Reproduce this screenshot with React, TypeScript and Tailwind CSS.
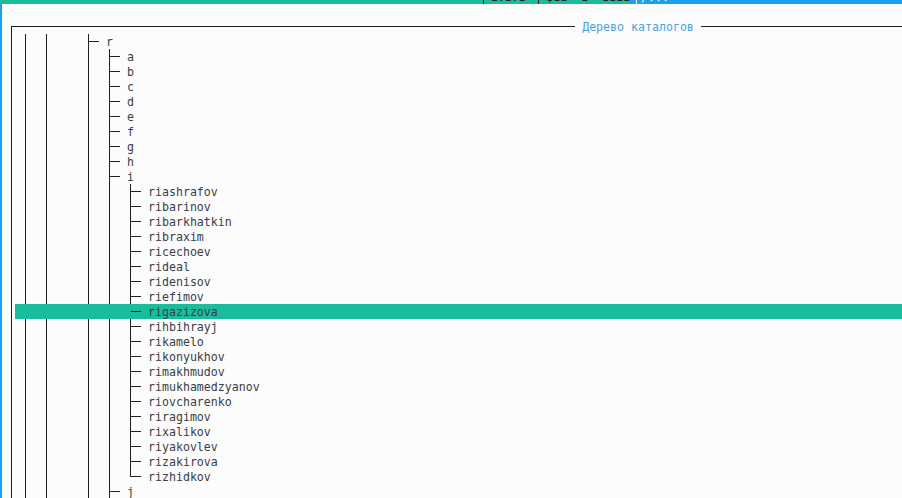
import clsx from "clsx";

type Cell = "v" | "b" | "l" | "_";

interface TreeRow {
  cells: Cell[];
  name: string;
}

const letters = ["a", "b", "c", "d", "e", "f", "g", "h", "i"];
const users = [
  "riashrafov",
  "ribarinov",
  "ribarkhatkin",
  "ribraxim",
  "ricechoev",
  "rideal",
  "ridenisov",
  "riefimov",
  "rigazizova",
  "rihbihrayj",
  "rikamelo",
  "rikonyukhov",
  "rimakhmudov",
  "rimukhamedzyanov",
  "riovcharenko",
  "riragimov",
  "rixalikov",
  "riyakovlev",
  "rizakirova",
  "rizhidkov",
];

const rows: TreeRow[] = [{ cells: ["v", "v", "_", "b"], name: "r" }];
letters.forEach((l) => rows.push({ cells: ["v", "v", "_", "v", "b"], name: l }));
users.forEach((u, i) =>
  rows.push({ cells: ["v", "v", "_", "v", "v", i === users.length - 1 ? "l" : "b"], name: u })
);
rows.push({ cells: ["v", "v", "_", "v", "b"], name: "j" });

const SELECTED = "rigazizova";

function TreeCell({ kind, selected }: { kind: Cell; selected: boolean }) {
  if (kind === "_") return <div className="h-[15px] w-[21px] shrink-0" />;
  return (
    <div className="flex h-[15px] w-[21px] shrink-0">
      <div className="w-[3px]" />
      <div className="flex w-px flex-col">
        {!selected && (
          <div className={clsx("w-px bg-[#1f1f1f]", kind === "l" ? "h-[8px]" : "h-full")} />
        )}
      </div>
      {kind !== "v" ? (
        <div className="flex w-[10px] flex-col pt-[7px]">
          <div className="h-px w-full bg-[#1f1f1f]" />
        </div>
      ) : null}
    </div>
  );
}

export default function App() {
  return (
    <div
      className="flex h-[498px] w-[902px] flex-col overflow-hidden bg-[#fcfcfc] text-[11.6px]"
      style={{ fontFamily: '"DejaVu Sans Mono", "Liberation Mono", monospace' }}
    >
      {/* clipped status bar of the terminal */}
      <div className="h-[4px] shrink-0 overflow-hidden">
        <div className="-mt-[11px] flex h-[15px] leading-[17px]">
          <div className="flex w-[630px] bg-[#1abc9c] text-[#222]">
            <div className="w-[487px]" />
            <div className="w-px bg-[#222]" />
            <div className="w-[55px] pl-[7px] whitespace-pre">1.1.1</div>
            <div className="w-px bg-[#222]" />
            <div className="flex-1 pl-[7px] whitespace-pre">$11  1  1111</div>
          </div>
          <div className="w-[6px] bg-[#1d9ff0]" />
          <div className="w-px bg-white" />
          <div className="flex-1 bg-[#1d9ff0] pl-[4px] text-white whitespace-pre">/...</div>
        </div>
      </div>

      <div className="flex flex-1">
        <div className="w-[2px] shrink-0 bg-[#1d9ff0]" />
        <div className="flex flex-1 flex-col">
          <div className="h-[15px] shrink-0" />

          {/* frame title */}
          <div className="flex h-[15px] shrink-0">
            <div className="w-[9px]" />
            <div className="flex w-[564px] flex-col">
              <div className="h-[7px]" />
              <div className="flex-1 border-l border-t border-[#1f1f1f]" />
            </div>
            <div className="w-[126px] text-center leading-[17px] text-[#4aa2e6] whitespace-pre">
              Дерево каталогов
            </div>
            <div className="flex flex-1 flex-col">
              <div className="h-[7px]" />
              <div className="border-t border-[#1f1f1f]" />
            </div>
          </div>

          {rows.map((row) => {
            const selected = row.name === SELECTED;
            return (
              <div key={row.name} className="flex h-[15px] shrink-0">
                <div className="w-[9px]" />
                <div className="w-px bg-[#1f1f1f]" />
                <div className="w-[3px]" />
                <div className={clsx("flex flex-1 pl-[7px]", selected && "bg-[#1abc9c]")}>
                  {row.cells.map((c, i) => (
                    <TreeCell key={i} kind={c} selected={selected} />
                  ))}
                  <span className="leading-[17px] text-[#3a3c48] whitespace-pre">{row.name}</span>
                </div>
              </div>
            );
          })}
        </div>
      </div>
    </div>
  );
}
